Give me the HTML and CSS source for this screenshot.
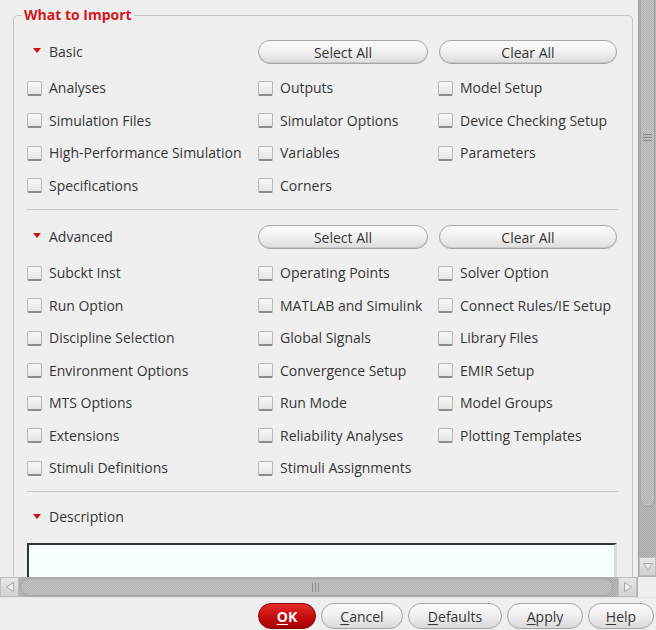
FILE: index.html
```html
<!DOCTYPE html>
<html>
<head>
<meta charset="utf-8">
<link rel="stylesheet" href="styles.css">
</head>
<body>
<div class="dialog">
  <div class="viewport">
    <fieldset class="group">
      <legend class="group-title">What to Import</legend>

      <section class="sec">
        <div class="sec-head">
          <div class="sec-title"><span class="tri"></span>Basic</div>
          <button class="pill pill-sel">Select All</button>
          <button class="pill pill-clr">Clear All</button>
        </div>
        <div class="checks">
          <label class="chk"><span class="box"></span>Analyses</label>
          <label class="chk"><span class="box"></span>Outputs</label>
          <label class="chk"><span class="box"></span>Model Setup</label>
          <label class="chk"><span class="box"></span>Simulation Files</label>
          <label class="chk"><span class="box"></span>Simulator Options</label>
          <label class="chk"><span class="box"></span>Device Checking Setup</label>
          <label class="chk"><span class="box"></span>High-Performance Simulation</label>
          <label class="chk"><span class="box"></span>Variables</label>
          <label class="chk"><span class="box"></span>Parameters</label>
          <label class="chk"><span class="box"></span>Specifications</label>
          <label class="chk"><span class="box"></span>Corners</label>
        </div>
      </section>

      <hr class="sep">

      <section class="sec">
        <div class="sec-head">
          <div class="sec-title"><span class="tri"></span>Advanced</div>
          <button class="pill pill-sel">Select All</button>
          <button class="pill pill-clr">Clear All</button>
        </div>
        <div class="checks">
          <label class="chk"><span class="box"></span>Subckt Inst</label>
          <label class="chk"><span class="box"></span>Operating Points</label>
          <label class="chk"><span class="box"></span>Solver Option</label>
          <label class="chk"><span class="box"></span>Run Option</label>
          <label class="chk"><span class="box"></span>MATLAB and Simulink</label>
          <label class="chk"><span class="box"></span>Connect Rules/IE Setup</label>
          <label class="chk"><span class="box"></span>Discipline Selection</label>
          <label class="chk"><span class="box"></span>Global Signals</label>
          <label class="chk"><span class="box"></span>Library Files</label>
          <label class="chk"><span class="box"></span>Environment Options</label>
          <label class="chk"><span class="box"></span>Convergence Setup</label>
          <label class="chk"><span class="box"></span>EMIR Setup</label>
          <label class="chk"><span class="box"></span>MTS Options</label>
          <label class="chk"><span class="box"></span>Run Mode</label>
          <label class="chk"><span class="box"></span>Model Groups</label>
          <label class="chk"><span class="box"></span>Extensions</label>
          <label class="chk"><span class="box"></span>Reliability Analyses</label>
          <label class="chk"><span class="box"></span>Plotting Templates</label>
          <label class="chk"><span class="box"></span>Stimuli Definitions</label>
          <label class="chk"><span class="box"></span>Stimuli Assignments</label>
        </div>
      </section>

      <hr class="sep sep-last">

      <section class="sec">
        <div class="sec-head">
          <div class="sec-title"><span class="tri"></span>Description</div>
        </div>
        <div class="desc-box"></div>
      </section>
    </fieldset>
  </div>

  <div class="vscroll">
    <div class="vthumb"><span class="vgrip"></span></div>
    <div class="vtrack"></div>
    <div class="sbtn sbtn-down">
      <svg width="12" height="10" viewBox="0 0 12 10"><path d="M1.5 1.5 L10.5 1.5 L6 8.5 Z" fill="#e8e8e8" stroke="#a8a8a8" stroke-width="1"/></svg>
    </div>
  </div>

  <div class="hscroll">
    <div class="sbtn sbtn-left">
      <svg width="10" height="12" viewBox="0 0 10 12"><path d="M8.5 1.5 L8.5 10.5 L1.5 6 Z" fill="#f0f0f0" stroke="#a8a8a8" stroke-width="1"/></svg>
    </div>
    <div class="htrack">
      <div class="hthumb"><span class="hgrip"></span></div>
    </div>
    <div class="sbtn sbtn-right">
      <svg width="10" height="12" viewBox="0 0 10 12"><path d="M1.5 1.5 L1.5 10.5 L8.5 6 Z" fill="#f0f0f0" stroke="#a8a8a8" stroke-width="1"/></svg>
    </div>
  </div>
  <div class="corner"></div>

  <div class="footer">
    <button class="fbtn fbtn-ok"><u>O</u>K</button>
    <button class="fbtn fbtn-cancel"><u>C</u>ancel</button>
    <button class="fbtn fbtn-defaults"><u>D</u>efaults</button>
    <button class="fbtn fbtn-apply"><u>A</u>pply</button>
    <button class="fbtn fbtn-help"><u>H</u>elp</button>
  </div>
</div>
</body>
</html>
```

FILE: styles.css
```css
* { box-sizing: border-box; }

html, body {
  margin: 0;
  padding: 0;
  background: #efefef;
}

body {
  font-family: "Open Sans", "Noto Sans", sans-serif;
  font-size: 14px;
  color: #363636;
}

.dialog {
  width: 656px;
  height: 630px;
  display: grid;
  grid-template-columns: 638px 18px;
  grid-template-rows: 577px 20px 33px;
  overflow: hidden;
}

/* ---------- main scrolled area ---------- */
.viewport {
  grid-column: 1;
  grid-row: 1;
  overflow: hidden;
}

.group {
  margin: 6px 0 0 13px;
  width: 620px;
  min-width: 0;
  padding: 16px 14px 0 13px;
  border: 1px solid #c4c4c4;
  border-radius: 5px;
}

.group-title {
  margin-left: -5px;
  padding: 0 2px;
  font-weight: bold;
  color: #d4161d;
  font-size: 14px;
  line-height: 18px;
}

.sec-head {
  display: grid;
  grid-template-columns: 231px 180px 179px;
  height: 24px;
  align-items: center;
}

.sec-title {
  display: flex;
  align-items: center;
  padding-left: 6px;
  line-height: 18px;
  margin-top: -1px;
}

.tri {
  width: 0;
  height: 0;
  border-left: 4.5px solid transparent;
  border-right: 4.5px solid transparent;
  border-top: 5px solid #c8101a;
  margin-right: 8px;
  margin-top: -2px;
}

.pill {
  height: 24px;
  border: 1px solid #a6a6a6;
  border-radius: 12px;
  background: linear-gradient(#fbfbfb 0%, #f2f2f2 45%, #dcdcdc 100%);
  font-family: inherit;
  font-size: 14px;
  color: #363636;
  padding: 0;
  box-shadow: inset 0 -1px 0 #c8c8c8;
}

.pill-sel { width: 170px; }
.pill-clr { width: 178px; margin-left: 1px; }

.checks {
  display: grid;
  grid-template-columns: 231px 180px 179px;
  grid-auto-rows: 32.5px;
  margin-top: 8px;
  align-items: center;
}

.chk {
  display: flex;
  align-items: center;
  gap: 7px;
  line-height: 18px;
  white-space: nowrap;
}

.box {
  width: 15px;
  height: 15px;
  border: 1px solid #b8b8b8;
  border-bottom: 2px solid #8a8a8a;
  border-radius: 2px;
  background: linear-gradient(#f8f8f8, #e6e6e6);
  flex: none;
}

.sep {
  margin: 7px 0 15px 0;
  border: 0;
  border-top: 1px solid #c9cdcd;
  height: 0;
}

.sep-last {
  margin: 6px 0 14px 0;
}

.desc-box {
  margin-top: 13px;
  width: 590px;
  height: 80px;
  background: #f7ffff;
  border-top: 2px solid #333;
  border-left: 2px solid #333;
  border-right: 3px solid #d8dcdc;
}

/* ---------- scrollbars ---------- */
.vscroll {
  grid-column: 2;
  grid-row: 1;
  display: flex;
  flex-direction: column;
  background: repeating-conic-gradient(#a9a9a9 0 25%, #b9b9b9 0 50%) 0 0 / 2px 2px;
  border-left: 1px solid #9c9c9c;
}

.vthumb {
  height: 507px;
  margin: 0 1px 0 1px;
  border-radius: 0 0 7px 7px;
  background: repeating-conic-gradient(#b3b3b3 0 25%, #c3c3c3 0 50%) 0 0 / 2px 2px;
  border: 1px solid #a4a4a4;
  border-top: 0;
  display: flex;
  justify-content: center;
  padding-top: 134px;
}

.vgrip {
  width: 9px;
  height: 9px;
  background: repeating-linear-gradient(#8c8c8c 0 1px, transparent 1px 3px);
}

.vtrack { flex: 1; }

.sbtn {
  display: flex;
  align-items: center;
  justify-content: center;
  background: linear-gradient(#e6e6e6, #d2d2d2);
  border: 1px solid #bdbdbd;
}

.sbtn-down {
  height: 19px;
  margin-bottom: 1px;
}

.hscroll {
  grid-column: 1;
  grid-row: 2;
  display: flex;
  background: repeating-conic-gradient(#a9a9a9 0 25%, #b9b9b9 0 50%) 0 0 / 2px 2px;
  padding-right: 1px;
}

.sbtn-left { width: 19px; }
.sbtn-right { width: 19px; }

.htrack {
  flex: 1;
  display: flex;
  align-items: stretch;
  padding: 1px 0;
}

.hthumb {
  width: 593px;
  margin-left: 1px;
  border-radius: 9px;
  background: repeating-conic-gradient(#b3b3b3 0 25%, #c3c3c3 0 50%) 0 0 / 2px 2px;
  border: 1px solid #a4a4a4;
  display: flex;
  align-items: center;
  justify-content: center;
}

.hgrip {
  width: 9px;
  height: 9px;
  background: repeating-linear-gradient(90deg, #8c8c8c 0 1px, transparent 1px 3px);
}

.corner {
  grid-column: 2;
  grid-row: 2;
  background: #efefef;
}

/* ---------- footer ---------- */
.footer {
  grid-column: 1 / span 2;
  grid-row: 3;
  display: flex;
  justify-content: flex-end;
  gap: 5px;
  padding: 5px 2px 0 0;
  border-top: 1px solid #e4e4e4;
}

.fbtn {
  height: 26px;
  border: 1px solid #a6a6a6;
  border-radius: 13px;
  background: linear-gradient(#fbfbfb 0%, #f0f0f0 45%, #d9d9d9 100%);
  font-family: inherit;
  font-size: 14px;
  color: #363636;
  padding: 0;
}

.fbtn u { text-underline-offset: 2px; }

.fbtn-ok {
  width: 58px;
  background: linear-gradient(#e52a2a 0%, #c80e0e 50%, #a40000 100%);
  border-color: #8a0000;
  color: #fff;
  font-weight: bold;
}

.fbtn-cancel { width: 82px; }
.fbtn-defaults { width: 94px; }
.fbtn-apply { width: 76px; }
.fbtn-help { width: 66px; }
```
